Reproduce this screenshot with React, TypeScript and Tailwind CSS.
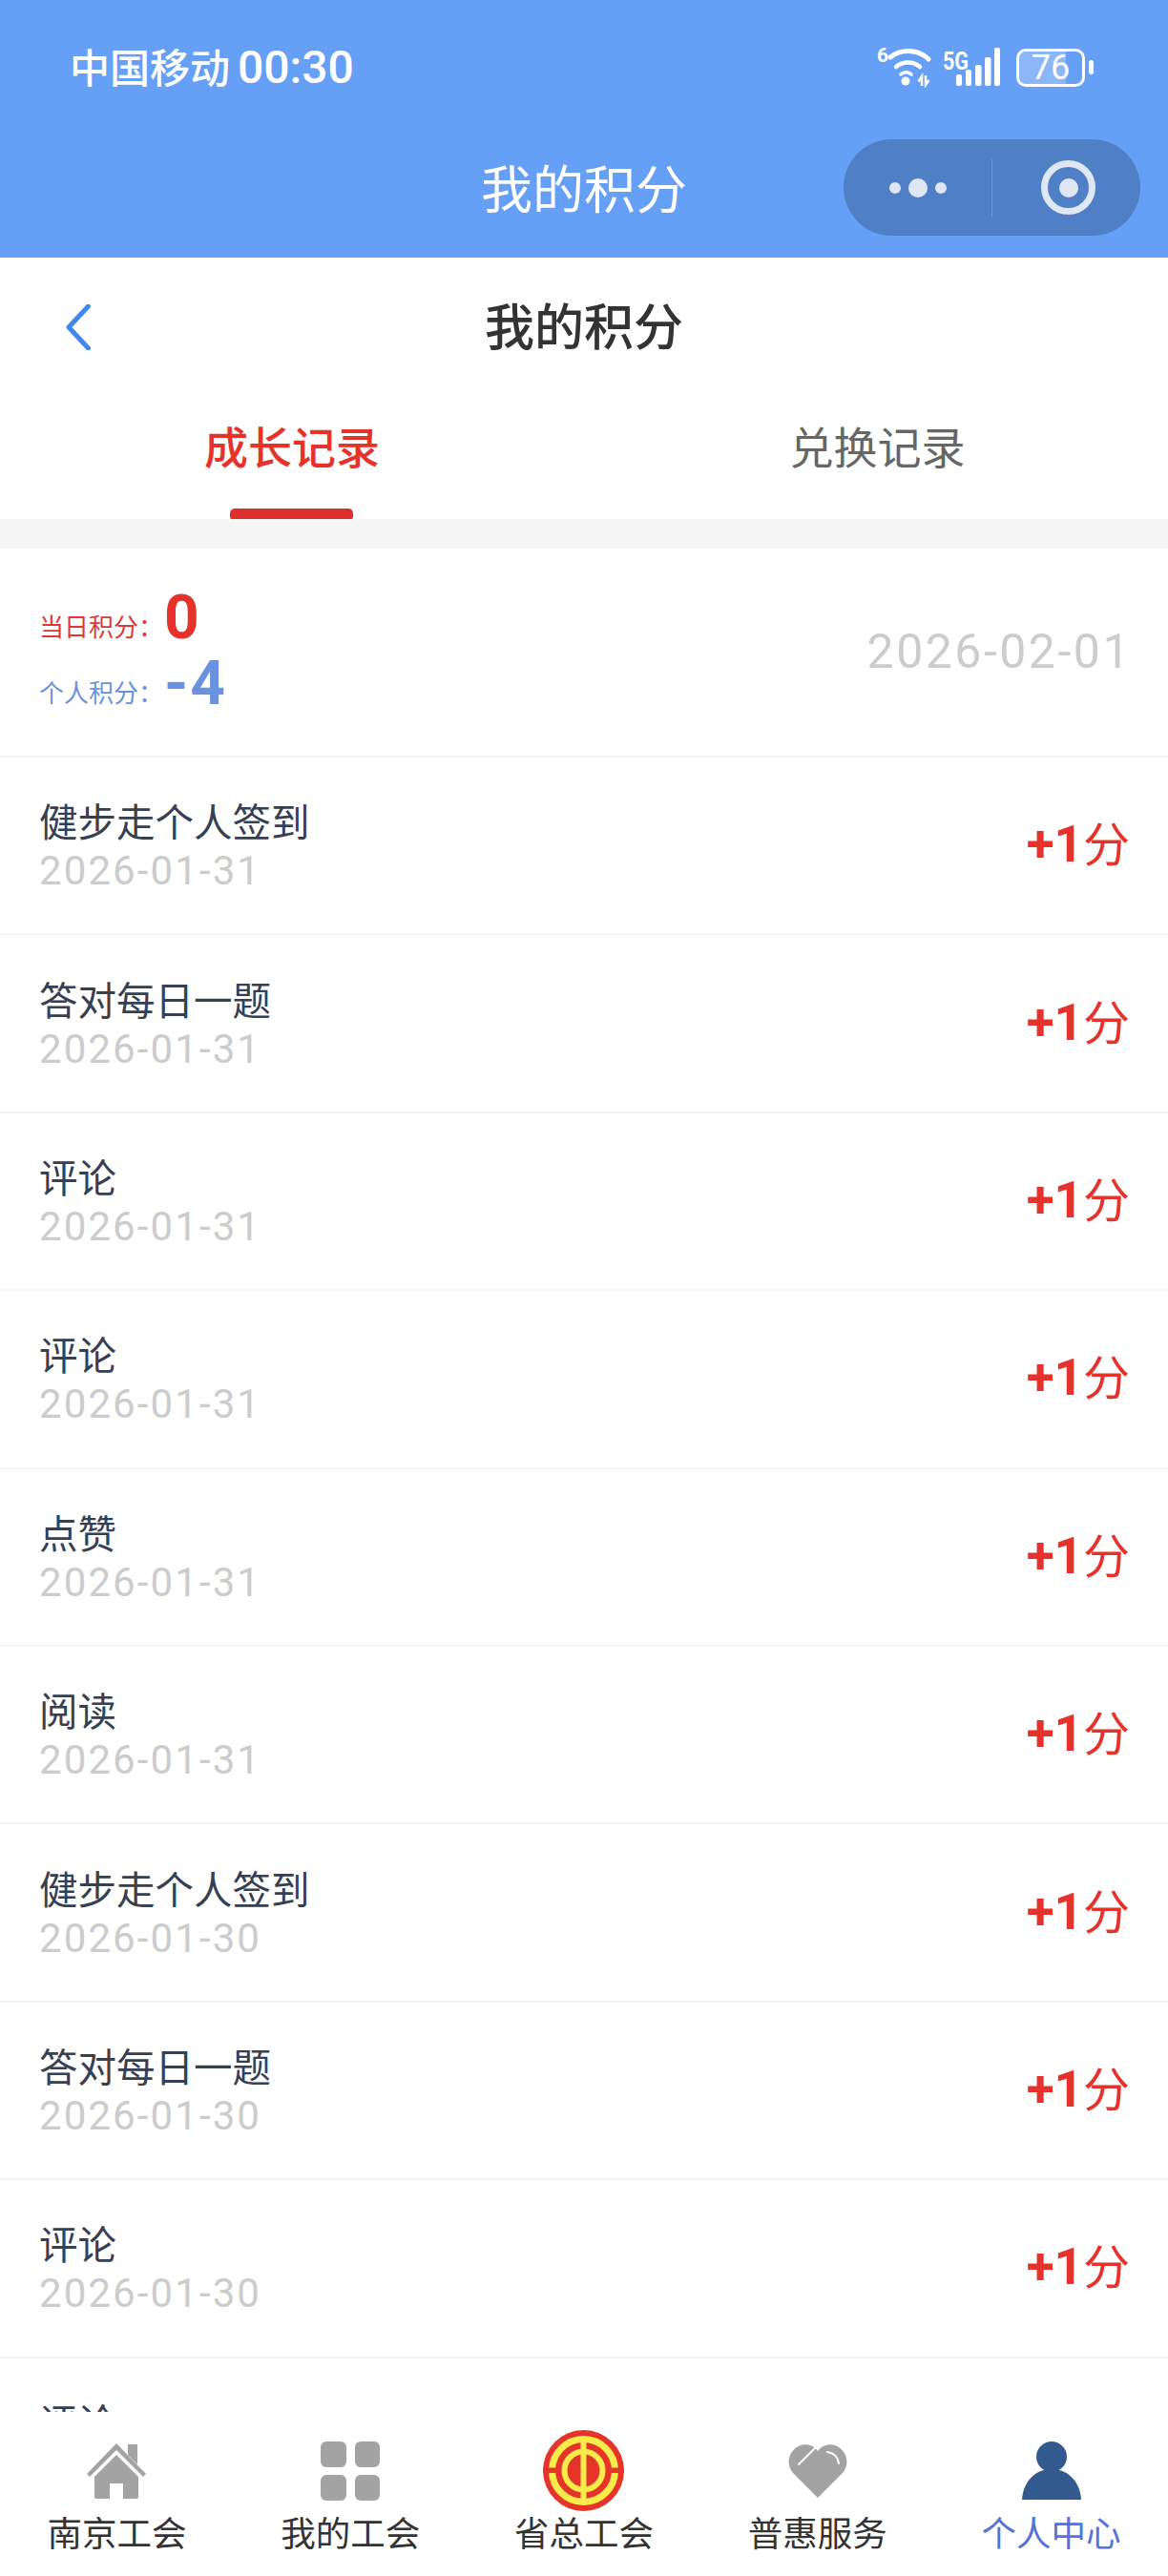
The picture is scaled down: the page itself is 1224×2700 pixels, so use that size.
import React from 'react';

const records = [
    { title: '健步走个人签到', date: '2026-01-31' },
    { title: '答对每日一题', date: '2026-01-31' },
    { title: '评论', date: '2026-01-31' },
    { title: '评论', date: '2026-01-31' },
    { title: '点赞', date: '2026-01-31' },
    { title: '阅读', date: '2026-01-31' },
    { title: '健步走个人签到', date: '2026-01-30' },
    { title: '答对每日一题', date: '2026-01-30' },
    { title: '评论', date: '2026-01-30' },
    { title: '评论', date: '2026-01-30' },
];

function StatusIcons() {
    return (
        <div className="flex items-start text-white">
            {/* wifi + 5G signal */}
            <svg width="135" height="52" viewBox="0 0 135 52" fill="none" className="block">
                <text x="4" y="25" fontSize="21" fontWeight="700" fill="#fff" fontFamily="Roboto">6</text>
                <path d="M18 20C29 11 47 11 58 22" stroke="#fff" strokeWidth="5" strokeLinecap="round" />
                <path d="M24 30C31 24 42 24 49 30" stroke="#fff" strokeWidth="4.500" strokeLinecap="round" />
                <path d="M29 38C32 35 37 35 40 38" stroke="#fff" strokeWidth="3.500" strokeLinecap="round" />
                <circle cx="34" cy="45" r="4.500" fill="#fff" />
                <path d="M51 50V40l-3.500 5.500M55 39v10l3.500-5" stroke="#fff" strokeWidth="2.500" />
                <text x="73" y="33" fontSize="25" fontWeight="700" fill="#fff" fontFamily="Roboto" textLength="27" lengthAdjust="spacingAndGlyphs">5G</text>
                <rect x="87" y="38" width="6" height="12" rx="2" fill="#fff" />
                <rect x="97" y="33" width="6" height="17" rx="2" fill="#fff" />
                <rect x="107" y="28" width="6.500" height="22" rx="2" fill="#fff" />
                <rect x="117" y="20" width="6.500" height="30" rx="2" fill="#fff" />
                <rect x="127" y="10" width="6" height="40" rx="2" fill="#fff" />
            </svg>
            {/* battery */}
            <div className="ml-[15px] mt-[11px] relative w-[72px] h-[40px] rounded-[10px] border-[3px] border-white overflow-hidden">
                <div className="absolute left-0 top-0 bottom-0 w-[74%] bg-white/25" />
                <span className="absolute inset-0 flex items-center justify-center text-[36px] leading-none [font-family:'Roboto',sans-serif]">76</span>
            </div>
            <div className="ml-[4px] mt-[23px] w-[5px] h-[15px] rounded-[3px] bg-white" />
        </div>
    );
}

function HomeIcon() {
    return (
        <svg width="62" height="58" viewBox="0 0 62 58" fill="#a3a3a3">
            <path d="M43 1h10v21l-10-10z" />
            <path d="M31 0L62 32l-3 3L31 7 3 35l-3-3z" />
            <path d="M31 12l23 23v21a2 2 0 0 1-2 2H38V42H24v16H10a2 2 0 0 1-2-2V35z" />
        </svg>
    );
}

function GridIcon() {
    return (
        <div className="grid grid-cols-2 gap-x-[9px] gap-y-[8px] w-[62px]">
            <div className="h-[27px] rounded-[6px] bg-[#a3a3a3]" />
            <div className="h-[27px] rounded-[6px] bg-[#a3a3a3]" />
            <div className="h-[27px] rounded-[6px] bg-[#a3a3a3]" />
            <div className="h-[27px] rounded-[6px] bg-[#a3a3a3]" />
        </div>
    );
}

function UnionEmblem() {
    return (
        <svg width="85" height="85" viewBox="0 0 85 85">
            <circle cx="42.500" cy="42.500" r="42.500" fill="#e5352b" />
            <circle cx="42.500" cy="42.500" r="33" fill="none" stroke="#f8ec4a" strokeWidth="7" />
            <circle cx="42.500" cy="42.500" r="20" fill="none" stroke="#f8ec4a" strokeWidth="6" />
            <rect x="39.500" y="7" width="6" height="71" fill="#f8ec4a" />
            <rect x="0" y="39.500" width="16" height="5.500" fill="#e5352b" />
            <rect x="69" y="39.500" width="16" height="5.500" fill="#e5352b" />
        </svg>
    );
}

function HeartIcon() {
    return (
        <svg width="62" height="57" viewBox="0 0 62 57">
            <path d="M31 57L5 31C-3 22 0 7 13 2c8-2 14 1 18 6 4-5 10-8 18-6 13 5 16 20 8 29z" fill="#a3a3a3" />
            <path d="M11 22L29 4" stroke="#fff" strokeWidth="2" strokeLinecap="round" />
            <path d="M41 9c6 1 11 5 12 12" stroke="#fff" strokeWidth="2" fill="none" strokeLinecap="round" />
        </svg>
    );
}

function PersonIcon() {
    return (
        <svg width="62" height="62" viewBox="0 0 62 62" fill="#335a8f">
            <ellipse cx="31" cy="16" rx="16" ry="16" />
            <path d="M0 61C1 42 14 29 31 29s30 13 31 32z" />
        </svg>
    );
}

const navItems = [
    { label: '南京工会', icon: <HomeIcon /> },
    { label: '我的工会', icon: <GridIcon /> },
    { label: '省总工会', icon: <UnionEmblem /> },
    { label: '普惠服务', icon: <HeartIcon /> },
    { label: '个人中心', icon: <PersonIcon />, active: true },
];

export default function App() {
    return (
        <div className="w-[1224px] h-[2700px] flex flex-col overflow-hidden bg-white [font-family:'Roboto','Noto_Sans_CJK_SC',sans-serif]">
            {/* WeChat title area */}
            <header className="h-[270px] shrink-0 bg-[#659ff6] text-white">
                <div className="h-[146px] pl-[73px] pr-[78px] flex items-start justify-between">
                    <div className="pt-[44px] leading-[54px] font-medium">
                        <span className="text-[42px]">中国移动</span>
                        <span className="text-[48px] ml-[8px]">00:30</span>
                    </div>
                    <div className="pt-[40px]">
                        <StatusIcons />
                    </div>
                </div>
                <div className="relative flex items-center justify-center h-[100px] pt-[10px]">
                    <span className="text-[54px] leading-[60px]">我的积分</span>
                    <div className="absolute right-[29px] top-0 w-[311px] h-[101px] rounded-full bg-[#4f80c6] flex items-center">
                        <div className="w-[155px] flex items-center justify-center gap-[8px]">
                            <div className="w-[12px] h-[12px] rounded-full bg-[#dfe7f5]" />
                            <div className="w-[20px] h-[20px] rounded-full bg-[#dfe7f5]" />
                            <div className="w-[12px] h-[12px] rounded-full bg-[#dfe7f5]" />
                        </div>
                        <div className="w-px h-[60px] bg-[#6d97d4]" />
                        <div className="flex-1 flex items-center justify-center pl-[4px]">
                            <div className="w-[57px] h-[57px] rounded-full border-[7px] border-[#dfe7f5] flex items-center justify-center">
                                <div className="w-[20px] h-[20px] rounded-full bg-[#dfe7f5]" />
                            </div>
                        </div>
                    </div>
                </div>
            </header>

            {/* Page title */}
            <div className="relative h-[146px] shrink-0 flex items-center justify-center pt-[4px]">
                <svg width="26" height="48" viewBox="0 0 26 48" fill="none" className="absolute left-[69px] top-[49px]">
                    <path d="M23.500 2L3 24l20.500 22" stroke="#4088ee" strokeWidth="5" strokeLinecap="round" strokeLinejoin="round" />
                </svg>
                <span className="text-[52px] leading-[60px] font-medium text-[#333333]">我的积分</span>
            </div>

            {/* Tabs */}
            <div className="h-[128px] shrink-0 grid grid-cols-2">
                <div className="relative flex justify-center pt-[24px] text-[46px] leading-[60px] font-medium text-[#e5322a]">
                    成长记录
                    <div className="absolute bottom-0 left-[241px] w-[129px] h-[11px] rounded-t-[5px] rounded-b-[2px] bg-[#dc2f2c]" />
                </div>
                <div className="flex justify-center pt-[24px] pl-[3px] text-[46px] leading-[60px] text-[#666666]">兑换记录</div>
            </div>

            <div className="h-[31px] shrink-0 bg-[#f5f5f5]" />

            <div className="flex-1 min-h-0 overflow-hidden">
                {/* Summary */}
                <div className="h-[219px] border-b-2 border-[#f5f5f5] pl-[41px] pr-[38px] flex items-center justify-between">
                    <div className="pb-[4px]">
                        <div className="flex items-baseline h-[69px]">
                            <span className="w-[131px] text-[26px] text-[#dc3a35] -translate-y-[2px]">当日积分：</span>
                            <span className="text-[64px] leading-[69px] font-bold text-[#e5322a]">0</span>
                        </div>
                        <div className="flex items-baseline h-[69px]">
                            <span className="w-[131px] text-[26px] text-[#6b92d8] -translate-y-[2px]">个人积分：</span>
                            <span className="text-[64px] leading-[69px] font-bold text-[#6a92e0] tracking-[2px]">-4</span>
                        </div>
                    </div>
                    <span className="text-[50px] tracking-[2.500px] text-[#cccccc]">2026-02-01</span>
                </div>

                {/* Records */}
                {records.map((item, idx) => (
                    <div key={idx} className="h-[186.4px] border-b-2 border-[#f5f5f5] pl-[41px] pr-[40px] flex items-center justify-between">
                        <div className="pt-[4px]">
                            <div className="text-[40.500px] leading-[50px] text-[#354052]">{item.title}</div>
                            <div className="text-[42px] leading-[50px] tracking-[2.100px] text-[#cccccc]">{item.date}</div>
                        </div>
                        <div className="flex items-baseline text-[#e5322a] leading-[60px]">
                            <span className="font-bold text-[53px]">+1</span>
                            <span className="text-[49px]">分</span>
                        </div>
                    </div>
                ))}
            </div>

            {/* Bottom nav */}
            <nav className="h-[172px] shrink-0 bg-white pt-[19px] grid grid-cols-5">
                {navItems.map((item) => (
                    <div key={item.label} className="flex flex-col items-center">
                        <div className="h-[85px] flex items-center justify-center">{item.icon}</div>
                        <span className={item.active ? 'text-[36.500px] leading-[50px] text-[#5672d6]' : 'text-[36.500px] leading-[50px] text-[#333333]'}>
                            {item.label}
                        </span>
                    </div>
                ))}
            </nav>
        </div>
    );
}
